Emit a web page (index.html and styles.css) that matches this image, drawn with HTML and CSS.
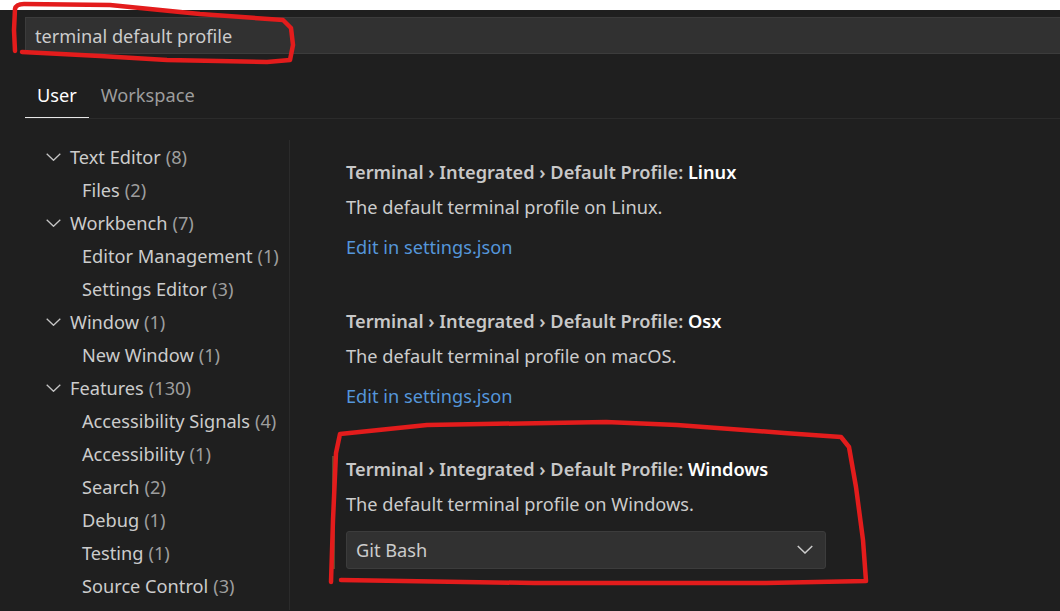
FILE: index.html
```html
<!DOCTYPE html>
<html lang="en">
<head>
<meta charset="utf-8">
<title>Settings</title>
<link rel="stylesheet" href="styles.css">
</head>
<body>
<div class="top-strip"></div>
<div class="editor">
  <header class="header">
    <div class="search">terminal default profile</div>
    <div class="tabs">
      <span class="tab active">User</span>
      <span class="tab">Workspace</span>
    </div>
  </header>
  <div class="body">
    <nav class="toc">
      <div class="node l1"><svg class="chev" viewBox="0 0 15 8"><polyline points="0.7,0.7 7.5,7.3 14.3,0.7"/></svg><span class="label">Text Editor</span><span class="count">(8)</span></div>
      <div class="node l2"><span class="label">Files</span><span class="count">(2)</span></div>
      <div class="node l1"><svg class="chev" viewBox="0 0 15 8"><polyline points="0.7,0.7 7.5,7.3 14.3,0.7"/></svg><span class="label">Workbench</span><span class="count">(7)</span></div>
      <div class="node l2"><span class="label">Editor Management</span><span class="count">(1)</span></div>
      <div class="node l2"><span class="label">Settings Editor</span><span class="count">(3)</span></div>
      <div class="node l1"><svg class="chev" viewBox="0 0 15 8"><polyline points="0.7,0.7 7.5,7.3 14.3,0.7"/></svg><span class="label">Window</span><span class="count">(1)</span></div>
      <div class="node l2"><span class="label">New Window</span><span class="count">(1)</span></div>
      <div class="node l1"><svg class="chev" viewBox="0 0 15 8"><polyline points="0.7,0.7 7.5,7.3 14.3,0.7"/></svg><span class="label">Features</span><span class="count">(130)</span></div>
      <div class="node l2"><span class="label">Accessibility Signals</span><span class="count">(4)</span></div>
      <div class="node l2"><span class="label">Accessibility</span><span class="count">(1)</span></div>
      <div class="node l2"><span class="label">Search</span><span class="count">(2)</span></div>
      <div class="node l2"><span class="label">Debug</span><span class="count">(1)</span></div>
      <div class="node l2"><span class="label">Testing</span><span class="count">(1)</span></div>
      <div class="node l2"><span class="label">Source Control</span><span class="count">(3)</span></div>
      <div class="node l2"><span class="label">Extensions</span><span class="count">(2)</span></div>
    </nav>
    <main class="list">
      <section class="item">
        <div class="setting">
          <div class="title"><span class="cat">Terminal › Integrated › Default Profile: </span><span class="key">Linux</span></div>
          <div class="desc">The default terminal profile on Linux.</div>
          <div class="link">Edit in settings.json</div>
        </div>
      </section>
      <section class="item">
        <div class="setting">
          <div class="title"><span class="cat">Terminal › Integrated › Default Profile: </span><span class="key">Osx</span></div>
          <div class="desc">The default terminal profile on macOS.</div>
          <div class="link">Edit in settings.json</div>
        </div>
      </section>
      <section class="item">
        <div class="setting focused">
          <div class="title"><span class="cat">Terminal › Integrated › Default Profile: </span><span class="key">Windows</span></div>
          <div class="desc">The default terminal profile on Windows.</div>
          <div class="select"><span>Git Bash</span><svg class="select-chev" viewBox="0 0 15 8"><polyline points="0.7,0.7 7.5,7.3 14.3,0.7"/></svg></div>
        </div>
      </section>
    </main>
  </div>
</div>
<svg class="annot" viewBox="0 0 1060 611" width="1060" height="611">
  <path d="M15,51 L14,30 L15,9 Q16,4 24,4 L110,5 L200,14 L283,20 L291,28 L293,45 L290,60 L267,62 L167,60 L100,56 L22,52"/>
  <path d="M331,582 L333,520 L336,453 L340,434 L427,425 L606,422 L677,425 L784,433 L841,437 L849,447 L856,487 L863,540 L866,581 L766,583 L534,583 L341,580"/>
</svg>
</body>
</html>
```

FILE: styles.css
```css
html, body {
  margin: 0;
  padding: 0;
}
body {
  width: 1060px;
  height: 611px;
  overflow: hidden;
  background: #1f1f1f;
  font-family: "Noto Sans", "Open Sans", sans-serif;
  font-size: 18.2px;
  color: #cccccc;
  position: relative;
}
.top-strip {
  height: 10px;
  background: #ffffff;
}
.editor {
  background: #1f1f1f;
  height: 601px;
}
.header {
  padding: 7px 0 0 25px;
}
.search {
  height: 33px;
  padding-top: 2px;
  margin-right: -20px;
  background: #313131;
  border: 1px solid #3c3c3c;
  border-right: none;
  line-height: 33px;
  padding-left: 9px;
  color: #cccccc;
}
.tabs {
  display: flex;
  margin-top: 19px;
  border-bottom: 1px solid #2b2b2b;
}
.tab {
  padding: 0 12px;
  height: 44px;
  line-height: 44px;
  color: #9d9d9d;
  border-bottom: 1px solid transparent;
}
.tab.active {
  color: #ffffff;
  border-bottom-color: #e7e7e7;
}
.body {
  display: flex;
  padding-top: 21px;
}
.toc {
  width: 264px;
  margin-left: 25px;
  border-right: 1px solid #2b2b2b;
  height: 470px;
}
.node {
  height: 33px;
  display: flex;
  align-items: center;
  white-space: nowrap;
}
.node.l1 {
  padding-left: 21px;
}
.node.l2 {
  padding-left: 57px;
}
.chev {
  width: 15px;
  height: 8px;
  margin-right: 9px;
  fill: none;
  stroke: #c5c5c5;
  stroke-width: 1.3;
}
.label {
  color: #cccccc;
}
.count {
  color: #9d9d9d;
  margin-left: 5px;
}
.list {
  flex: 1;
}
.item {
  padding: 19px 0 28.5px 42px;
}
.setting {
  border-left: 3px solid transparent;
  padding-left: 11px;
}
.setting.focused {
  border-left-color: #5b4a2d;
}
.title {
  line-height: 26px;
  font-weight: 600;
  white-space: nowrap;
}
.cat {
  color: #c8c8c8;
}
.key {
  color: #ffffff;
}
.desc {
  margin-top: 9px;
  line-height: 26px;
  color: #cccccc;
}
.link {
  margin-top: 14px;
  line-height: 26px;
  color: #5596da;
}
.select {
  margin-top: 13.5px;
  width: 457px;
  height: 36px;
  background: #313131;
  border: 1px solid #3c3c3c;
  border-radius: 3px;
  display: flex;
  align-items: center;
  justify-content: space-between;
  padding: 0 12px 0 9px;
  color: #cccccc;
}
.select-chev {
  width: 16px;
  height: 9px;
  fill: none;
  stroke: #cccccc;
  stroke-width: 1.4;
}
.annot {
  position: absolute;
  left: 0;
  top: 0;
  pointer-events: none;
  fill: none;
  stroke: #e31c1c;
  stroke-width: 4.5;
  stroke-linecap: round;
  stroke-linejoin: round;
}
```
